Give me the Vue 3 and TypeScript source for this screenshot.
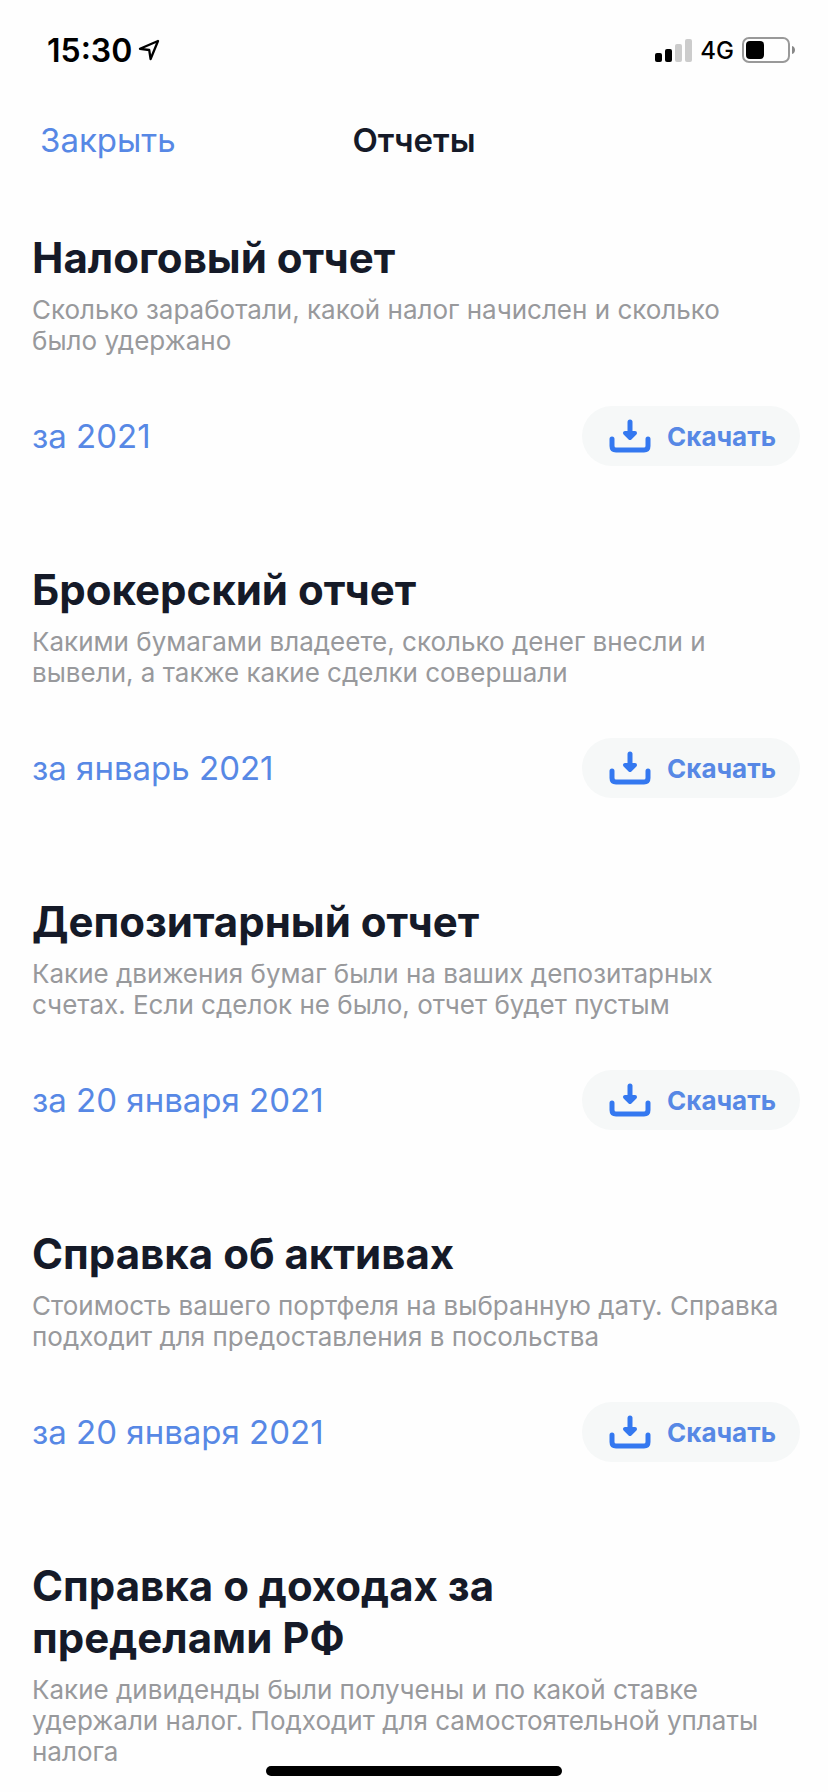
<script setup lang="ts">
interface Report {
  title: string
  text: string
  period: string
}

const reports: Report[] = [
  { title: 'Налоговый отчет', text: 'Сколько заработали, какой налог начислен и сколько было удержано', period: 'за 2021' },
  { title: 'Брокерский отчет', text: 'Какими бумагами владеете, сколько денег внесли и вывели, а также какие сделки совершали', period: 'за январь 2021' },
  { title: 'Депозитарный отчет', text: 'Какие движения бумаг были на ваших депозитарных счетах. Если сделок не было, отчет будет пустым', period: 'за 20 января 2021' },
  { title: 'Справка об активах', text: 'Стоимость вашего портфеля на выбранную дату. Справка подходит для предоставления в посольства', period: 'за 20 января 2021' },
  { title: 'Справка о доходах за пределами РФ', text: 'Какие дивиденды были получены и по какой ставке удержали налог. Подходит для самостоятельной уплаты налога', period: '' },
]
</script>

<template>
  <div class="screen">
    <div class="status">
      <span class="time">15:30</span>
      <svg class="loc" viewBox="0 0 22 22" width="22" height="22"><path d="M20 2 2 9.8l9.2 1.2L12.6 20Z" fill="none" stroke="#000" stroke-width="2.3" stroke-linejoin="round" /></svg>
      <div class="right">
        <svg width="37" height="24" viewBox="0 0 37 24">
          <rect x="0" y="15" width="7" height="9" rx="2" />
          <rect x="10" y="11" width="7" height="13" rx="2" />
          <rect x="20" y="6" width="7" height="18" rx="2" fill="#ccc" />
          <rect x="30" y="1" width="7" height="23" rx="2" fill="#ccc" />
        </svg>
        <span class="net">4G</span>
        <svg width="53" height="26" viewBox="0 0 53 26">
          <rect x="1" y="1" width="46" height="24" rx="6" fill="none" stroke="#999" stroke-width="2" />
          <rect x="4" y="4" width="18" height="18" rx="4" />
          <path d="M50 9c4 1 4 7 0 8Z" fill="#888" />
        </svg>
      </div>
    </div>
    <header class="nav">
      <button class="close" type="button">Закрыть</button>
      <h1>Отчеты</h1>
    </header>
    <main>
      <section v-for="r in reports" :key="r.title" class="report">
        <h2>{{ r.title }}</h2>
        <p>{{ r.text }}</p>
        <div v-if="r.period" class="row">
          <button class="period" type="button">{{ r.period }}</button>
          <button class="download" type="button">
            <svg width="42" height="34" viewBox="0 0 42 34" fill="none" stroke="#3478f0" stroke-width="5" stroke-linecap="round" stroke-linejoin="round">
              <path d="M3 20v7q0 4 4 4h28q4 0 4-4v-7" />
              <path d="M21 3v12" />
              <path d="M16 14h10l-5 5Z" fill="#3478f0" stroke-width="4" />
            </svg>
            <span>Скачать</span>
          </button>
        </div>
      </section>
    </main>
    <div class="home"></div>
  </div>
</template>

<style>
body { margin: 0; background: #fefefe; }
</style>

<style scoped>
.screen { position: relative; height: 100vh; overflow: hidden; background: #fefefe; font-family: Inter, "Liberation Sans", sans-serif; color: #151a28; }
.status { display: flex; align-items: center; height: 100px; padding: 0 33px 0 47px; box-sizing: border-box; color: #000; }
.time { font-size: 32px; font-weight: 600; }
.loc { margin-left: 6px; }
.right { display: flex; align-items: center; gap: 8px; margin-left: auto; }
.net { font-size: 24px; font-weight: 500; }
.nav { display: grid; grid-template-columns: 1fr auto 1fr; align-items: center; height: 80px; padding: 0 40px; }
button { border: 0; padding: 0; background: none; font: inherit; cursor: pointer; }
.close { justify-self: start; font-size: 33px; color: #5788e5; }
h1 { margin: 0; font-size: 33px; font-weight: 600; }
main { padding: 52px 28px 0 32px; }
.report { margin-bottom: 98px; }
h2 { margin: 0; max-width: 560px; font-size: 42px; line-height: 52px; font-weight: 700; }
p { margin: 10px 0 0; max-width: 752px; font-size: 26px; line-height: 31px; color: #98999c; }
.row { display: flex; align-items: center; justify-content: space-between; margin-top: 50px; }
.period { font-size: 33px; line-height: 40px; color: #5788e5; }
.download { display: flex; align-items: center; gap: 16px; height: 60px; padding: 0 24px 0 27px; border-radius: 30px; background: #f6f8f8; font-size: 26px; font-weight: 700; color: #5788e5; }
.home { position: absolute; left: 50%; bottom: 16px; width: 296px; height: 10px; margin-left: -148px; border-radius: 5px; background: #000; }
</style>
